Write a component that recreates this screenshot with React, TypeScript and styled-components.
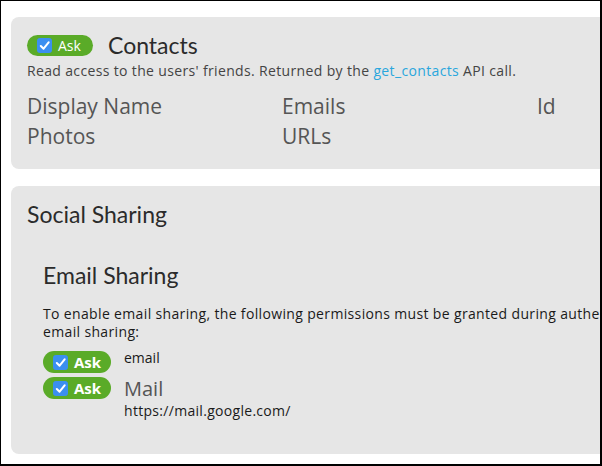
import styled, { createGlobalStyle } from "styled-components"

const Global = createGlobalStyle`
html, body {
  margin: 0;
  padding: 0;
  background: #fff;
}
body {
  font-family: "Open Sans", "Liberation Sans", sans-serif;
}
`

const Frame = styled.div`
box-sizing: border-box;
width: 602px;
height: 466px;
border-style: solid;
border-color: #000;
border-width: 1px 2px 2px 1px;
overflow: hidden;
padding: 16px 0 0 10px;
display: flex;
flex-direction: column;
gap: 17px;
`

const Panel = styled.section<{ $height: number }>`
box-sizing: border-box;
width: 860px;
height: ${p => p.$height}px;
flex-shrink: 0;
background: #e6e6e6;
border-radius: 8px;
padding: 16px 16px 0 16px;
`

const HeadRow = styled.div`
display: flex;
align-items: center;
gap: 15px;
`

const Badge = styled.label<{ $big?: boolean }>`
display: inline-flex;
align-items: center;
gap: 6px;
box-sizing: border-box;
width: ${p => (p.$big ? 68 : 66)}px;
height: ${p => (p.$big ? 22 : 21)}px;
padding-left: 10px;
background: #5aab28;
border-radius: 11px;
color: #fff;
font-size: ${p => (p.$big ? 15 : 14)}px;
font-weight: ${p => (p.$big ? 700 : 400)};
flex-shrink: 0;
`

const Check = styled.span`
display: inline-flex;
align-items: center;
justify-content: center;
width: 15px;
height: 15px;
border-radius: 3px;
background: #3b8ff0;
`

const Title = styled.h2`
margin: 0;
font-family: Lato, "Open Sans", sans-serif;
font-size: 23px;
font-weight: 400;
color: #2b2b2b;
line-height: 24px;
`

const Desc = styled.p`
margin: 5px 0 0;
font-size: 14px;
letter-spacing: 0.35px;
line-height: 18px;
color: #444;
`

const Link = styled.a`
color: #2aa6dd;
text-decoration: none;
`

const Fields = styled.div`
display: grid;
grid-template-columns: 255px 255px 255px;
margin-top: 11px;
`

const Field = styled.div`
font-size: 21px;
line-height: 30px;
color: #555;
`

const Section = styled.div`
padding: 37px 0 0 16px;
`

const Para = styled.p`
margin: 18px 0 0;
font-size: 14px;
letter-spacing: 0.35px;
line-height: 18px;
color: #1a1a1a;
`

const Perms = styled.div`
display: flex;
flex-direction: column;
gap: 4px;
margin-top: 10px;
`

const Perm = styled.div`
display: flex;
align-items: flex-start;
gap: 13px;
`

const PermText = styled.div`
display: flex;
flex-direction: column;
`

const PermName = styled.div<{ $big?: boolean }>`
font-size: ${p => (p.$big ? 20 : 14)}px;
line-height: ${p => (p.$big ? 23 : 14)}px;
color: ${p => (p.$big ? "#555" : "#1a1a1a")};
`

const PermUrl = styled.div`
font-size: 14px;
letter-spacing: 0.3px;
line-height: 22px;
color: #1a1a1a;
`

function Ask({ big }: { big?: boolean }) {
  return (
    <Badge $big={big}>
      <Check>
        <svg width="11" height="11" viewBox="0 0 12 12">
          <path d="M2 6.5 L5 9.5 L10.5 2.5" fill="none" stroke="#fff" strokeWidth="2.2" strokeLinecap="round" strokeLinejoin="round" />
        </svg>
      </Check>
      Ask
    </Badge>
  )
}

export default function App() {
  return (
    <>
      <Global />
      <Frame>
        <Panel $height={152}>
          <HeadRow>
            <Ask />
            <Title>Contacts</Title>
          </HeadRow>
          <Desc>
            Read access to the users' friends. Returned by the <Link>get_contacts</Link> API call.
          </Desc>
          <Fields>
            <Field>Display Name</Field>
            <Field>Emails</Field>
            <Field>Id</Field>
            <Field>Photos</Field>
            <Field>URLs</Field>
          </Fields>
        </Panel>
        <Panel $height={268}>
          <Title>Social Sharing</Title>
          <Section>
            <Title>Email Sharing</Title>
            <Para>
              To enable email sharing, the following permissions must be granted during authentication to enable
              <br />
              email sharing:
            </Para>
            <Perms>
              <Perm>
                <Ask big />
                <PermText>
                  <PermName>email</PermName>
                </PermText>
              </Perm>
              <Perm>
                <Ask big />
                <PermText>
                  <PermName $big>Mail</PermName>
                  <PermUrl>https://mail.google.com/</PermUrl>
                </PermText>
              </Perm>
            </Perms>
          </Section>
        </Panel>
      </Frame>
    </>
  )
}
